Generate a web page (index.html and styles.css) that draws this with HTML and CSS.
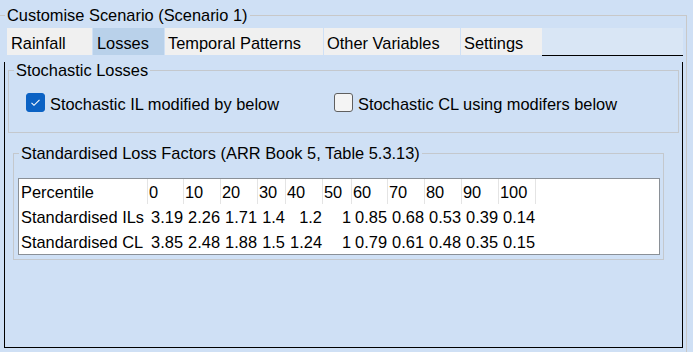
FILE: index.html
```html
<!DOCTYPE html>
<html>
<head>
  <meta charset="utf-8">
  <link rel="stylesheet" href="styles.css">
</head>
<body>
  <fieldset class="scenario">
    <legend>Customise Scenario (Scenario 1)</legend>

    <div class="tabs">
      <div class="tab tab-rainfall">Rainfall</div>
      <div class="tab tab-losses active">Losses</div>
      <div class="tab tab-temporal">Temporal Patterns</div>
      <div class="tab tab-other">Other Variables</div>
      <div class="tab tab-settings">Settings</div>
      <div class="tab-filler"></div>
    </div>

    <div class="tab-panel">
      <fieldset class="group stochastic">
        <legend>Stochastic Losses</legend>
        <div class="checks">
          <label class="check check-il">
            <span class="box checked">
              <svg width="19" height="19" viewBox="0 0 19 19"><path d="M5.5 9.8 L8 12.3 L13.5 6.8" fill="none" stroke="#fff" stroke-width="1.1"/></svg>
            </span>
            <span class="check-text">Stochastic IL modified by below</span>
          </label>
          <label class="check">
            <span class="box"></span>
            <span class="check-text">Stochastic CL using modifers below</span>
          </label>
        </div>
      </fieldset>

      <fieldset class="group factors">
        <legend>Standardised Loss Factors (ARR Book 5, Table 5.3.13)</legend>
        <div class="grid">
          <div class="head label">Percentile</div>
          <div class="head">0</div>
          <div class="head">10</div>
          <div class="head">20</div>
          <div class="head">30</div>
          <div class="head">40</div>
          <div class="head">50</div>
          <div class="head">60</div>
          <div class="head">70</div>
          <div class="head">80</div>
          <div class="head">90</div>
          <div class="head">100</div>

          <div class="label">Standardised ILs</div>
          <div class="num">3.19</div>
          <div class="num">2.26</div>
          <div class="num">1.71</div>
          <div class="num">1.4</div>
          <div class="num">1.2</div>
          <div class="num">1</div>
          <div class="num">0.85</div>
          <div class="num">0.68</div>
          <div class="num">0.53</div>
          <div class="num">0.39</div>
          <div class="num">0.14</div>

          <div class="label">Standardised CL</div>
          <div class="num">3.85</div>
          <div class="num">2.48</div>
          <div class="num">1.88</div>
          <div class="num">1.5</div>
          <div class="num">1.24</div>
          <div class="num">1</div>
          <div class="num">0.79</div>
          <div class="num">0.61</div>
          <div class="num">0.48</div>
          <div class="num">0.35</div>
          <div class="num">0.15</div>
        </div>
      </fieldset>
    </div>
  </fieldset>
</body>
</html>
```

FILE: styles.css
```css
* {
  box-sizing: border-box;
}

body {
  margin: 0;
  width: 693px;
  height: 352px;
  overflow: hidden;
  background: #cfe0f5;
  color: #000000;
  font-family: 'Liberation Sans', Arial, sans-serif;
  font-size: 16.4px;
}

fieldset {
  margin: 0;
  padding: 0;
  min-width: 0;
}

legend {
  padding: 0 2px;
  line-height: 17px;
  white-space: nowrap;
}

/* outer group */

.scenario {
  margin: 7px 6px 0 -1px;
  padding: 4px 3px 4px 4px;
  border: 1px solid #c8c8c8;
}

.scenario > legend {
  margin-left: 1px;
}

/* tabs */

.tabs {
  display: flex;
  align-items: flex-start;
  margin-left: 3px;
  height: 28px;
}

.tab {
  height: 27px;
  margin-right: 1px;
  padding: 4px 0 0 4px;
  line-height: 23px;
  background: #f0f0f0;
  white-space: nowrap;
}

.tab.active {
  background: #b9d1ea;
}

.tab-rainfall { width: 85px; }
.tab-losses { width: 71px; }
.tab-temporal { width: 158px; padding-left: 3px; }
.tab-other { width: 136px; padding-left: 3px; }
.tab-settings { width: 81px; padding-left: 3px; margin-right: 0; }

.tab-filler {
  flex: 1;
  height: 28px;
  background: #d9e6f5;
  border-bottom: 1px solid #000000;
}

.tab-panel {
  height: 286px;
  padding: 0 3px;
  border: 1px solid #000000;
  border-top: none;
}

/* group boxes */

.group {
  border: 1px solid #c4c8cd;
}

.group > legend {
  margin-left: 5px;
}

.stochastic {
  margin-top: 6px;
}

.checks {
  display: flex;
  padding: 14px 0 18px 17px;
}

.check {
  display: flex;
  align-items: flex-start;
  gap: 5px;
  white-space: nowrap;
}

.check-il {
  width: 308px;
}

.box {
  width: 19px;
  height: 19px;
  border: 1px solid #5f5f5f;
  border-radius: 3px;
  background: #f4f4f4;
}

.box.checked {
  border-color: #0b62c4;
  background: #0b62c4;
}

.box svg {
  display: block;
  margin: -1px;
}

.check-text {
  padding-top: 2px;
  line-height: 19px;
}

.factors {
  margin: 12px 15px 0 5px;
}

/* loss factor table */

.grid {
  display: grid;
  grid-template-columns: 129px 36px 37px 37px 28px 37px 29px 36px 37px 37px 37px 37px;
  grid-auto-rows: 25px;
  height: 77px;
  margin: 16px 3px 4px 4px;
  background: #ffffff;
  border: 1px solid #8a9097;
}

.grid > div {
  padding-top: 1px;
  line-height: 24px;
  white-space: nowrap;
}

.head {
  padding-left: 1px;
  border-right: 1px solid #e4e4e4;
}

.label {
  padding-left: 2px;
}

.num {
  text-align: right;
  padding-right: 1px;
}
```
